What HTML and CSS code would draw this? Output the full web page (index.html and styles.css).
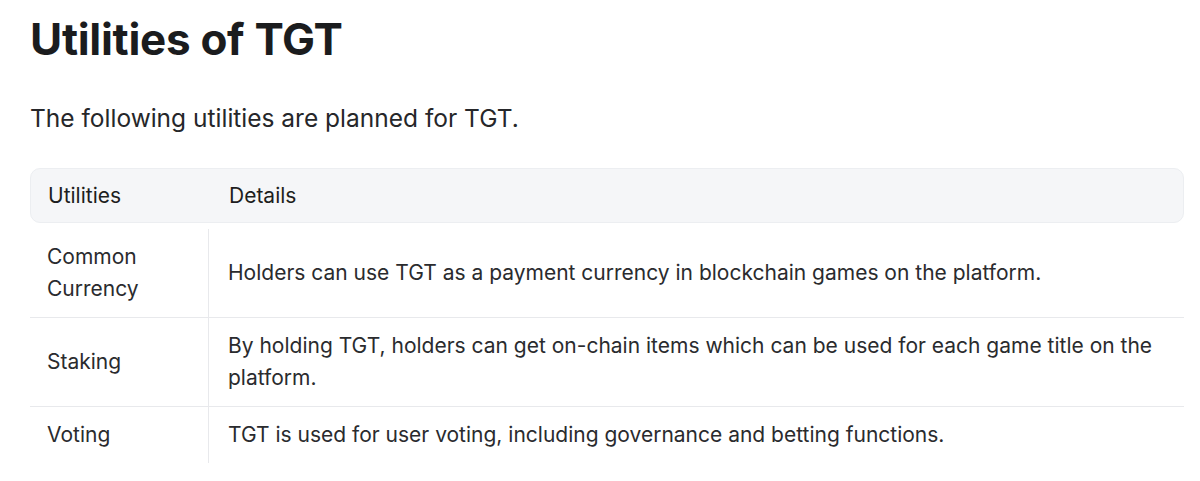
FILE: index.html
```html
<!DOCTYPE html>
<html lang="en">
<head>
<meta charset="utf-8">
<title>Utilities of TGT</title>
<link rel="stylesheet" href="styles.css">
</head>
<body>
<main class="doc">
  <h1 class="title">Utilities of TGT</h1>
  <p class="lead">The following utilities are planned for TGT.</p>
  <div class="table">
    <div class="thead">
      <div class="th col-a">Utilities</div>
      <div class="th col-b">Details</div>
    </div>
    <div class="tbody">
      <div class="row">
        <div class="td col-a">Common<br>Currency</div>
        <div class="td col-b">Holders can use TGT as a payment currency in blockchain games on the platform.</div>
      </div>
      <div class="row">
        <div class="td col-a">Staking</div>
        <div class="td col-b">By holding TGT, holders can get on-chain items which can be used for each game title on the platform.</div>
      </div>
      <div class="row last">
        <div class="td col-a">Voting</div>
        <div class="td col-b">TGT is used for user voting, including governance and betting functions.</div>
      </div>
    </div>
  </div>
</main>
</body>
</html>
```
FILE: styles.css
```css
html, body {
  margin: 0;
  padding: 0;
  background: #ffffff;
}
body {
  font-family: Inter, "Noto Sans", "Liberation Sans", sans-serif;
  color: #1d1e20;
}
.doc {
  padding: 11px 16px 0 30px;
}
.title {
  margin: 0;
  font-size: 44px;
  font-weight: 700;
  line-height: 56px;
  letter-spacing: -0.3px;
  color: #1b1c1e;
}
.lead {
  margin: 35px 0 0;
  font-size: 24.5px;
  line-height: 32px;
  color: #26272a;
}
.table {
  margin-top: 34px;
  font-size: 21px;
  line-height: 32px;
}
.thead {
  display: flex;
  background: #f5f6f8;
  border: 1px solid #eceef1;
  border-radius: 10px;
  height: 55px;
  box-sizing: border-box;
  align-items: center;
}
.th {
  color: #1d1e20;
}
.tbody {
  padding-top: 6px;
}
.row {
  display: flex;
  border-bottom: 1px solid #e8e9ec;
}
.row.last {
  border-bottom: none;
}
.col-a {
  width: 179px;
  flex: none;
  padding-left: 17px;
  box-sizing: border-box;
}
.col-b {
  flex: 1;
  padding-left: 19px;
  padding-right: 20px;
}
.td {
  display: flex;
  align-items: center;
  padding-top: 12px;
  padding-bottom: 12px;
  color: #2a2b2e;
}
.td.col-a {
  border-right: 1px solid #e8e9ec;
}
```
